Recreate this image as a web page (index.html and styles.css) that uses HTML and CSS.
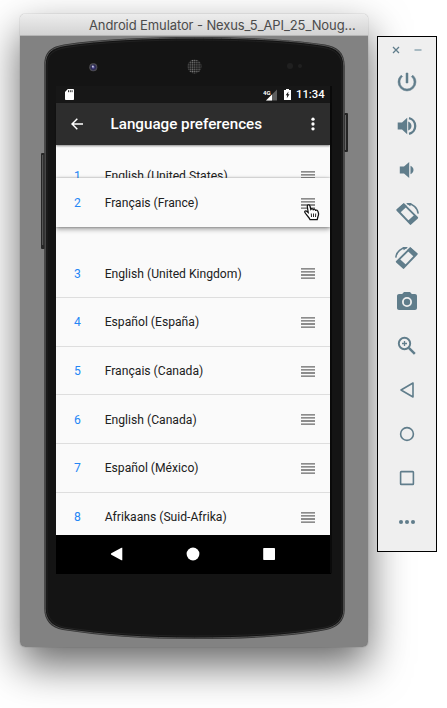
FILE: index.html
```html
<!DOCTYPE html>
<html lang="en">
<head>
<meta charset="utf-8">
<title>Android Emulator</title>
<link rel="stylesheet" href="styles.css">
</head>
<body>
<svg class="defs" width="0" height="0" aria-hidden="true">
  <symbol id="grip" viewBox="0 0 14 11"><path d="M0 .8h14M0 3.900h14M0 7h14M0 10.100h14" stroke="#686868" stroke-width="1.350"/></symbol>
  <symbol id="rotate" viewBox="0 0 24 24"><path d="M2.300 8 8.800 2.300 22.200 15.700 15.500 21.900Z" fill="none" stroke="currentColor" stroke-width="1.900" stroke-linejoin="round"/><path d="m1.500 7.800 7.300-6.500 3.300 3-7.200 6.700ZM12.400 19.300l7.100-6.500 3.200 3-7.200 6.800Z" fill="currentColor"/><path d="M12.300 2.100c5.300-.5 10.200 3.200 10.900 9.500" fill="none" stroke="currentColor" stroke-width="1.500"/><path d="M11 .9h5.500l-1.300 3.300Z" fill="currentColor"/></symbol>
</svg>
<main class="desktop">
  <section class="window">
    <header class="titlebar"><span>Android Emulator - Nexus_5_API_25_Noug…</span></header>
    <div class="stage">
      <svg class="device" viewBox="20 36 348 611" aria-hidden="true">
        <defs>
          <radialGradient id="lens"><stop offset="0" stop-color="#6b68b8"/><stop offset=".5" stop-color="#292653"/><stop offset="1" stop-color="#555"/></radialGradient>
          <pattern id="mesh" width="2.200" height="2.200" patternUnits="userSpaceOnUse"><rect width="2.200" height="2.200" fill="#171717"/><circle cx="1.100" cy="1.100" r=".75" fill="#777"/></pattern>
        </defs>
        <rect x="41" y="153" width="4" height="96" rx="1" fill="#262626"/><path d="M42.700 155v90" stroke="#606060"/>
        <rect x="344" y="113" width="4" height="39" rx="1" fill="#242424"/><path d="M345.500 115v35" stroke="#666"/>
        <path d="M44.300 65C44.300 51 52 46.500 64 44.500C100 39 146 37 194.500 37C244 37 291 39 325 44.500C337 46.500 344.700 52 344.700 66V610C344.700 621 337 628 326 630C289 637 244 639 194.500 639C144 639 101 636 63 630C51 628 44.300 620 44.300 609Z" fill="#303030"/>
        <path d="M45.300 65C45.300 52 53 47.500 65 45.500C101 40 147 38 194.500 38C243 38 290 40 324 45.500C336 47.500 343.700 53 343.700 66V610C343.700 620 336 627 325 629C288 636 243 638 194.500 638C145 638 102 635 64 629C52 627 45.300 619 45.300 609Z" fill="#141414" stroke="#5a5a5a" stroke-width=".9"/>
        <path d="M47 66C47 54 54 49.500 66 47.500C102 42 147 40 194.500 40C242 40 289 42 323 47.500C335 49.500 342 55 342 67V609C342 619 335 625.500 324 627.500C288 634 243 636 194.500 636C145 636 102 633 65 627.500C54 625.500 47 618 47 608Z" fill="#141414" stroke="#242424" stroke-width=".8"/>
        <circle cx="93.300" cy="67.300" r="4" fill="url(#lens)"/><circle cx="92.800" cy="66.500" r="1" fill="#c9c9df"/>
        <circle cx="194.500" cy="66.500" r="7" fill="url(#mesh)"/>
        <circle cx="290" cy="66" r="3" fill="#202020"/><circle cx="300" cy="66" r="2" fill="#202020"/>
        <path d="M56 573.500h275V86" fill="none" stroke="#000"/>
      </svg>
      <div class="screen">
        <div class="status">
          <svg class="sd" viewBox="0 0 9 11"><path d="M2.800 0H8.200Q9 0 9 .8v9.400q0 .8-.8.800H.8Q0 11 0 10.200V3Z" fill="#fff"/><path d="M3.500 1.200v2M5.300 1.200v2M7.100 1.200v2" stroke="#171717" stroke-width=".9"/></svg>
          <svg class="signal" viewBox="0 0 15 12"><path d="M14 .5v11H3Z" fill="#5e5e5e"/><path d="M9 5.500v6H3Z" fill="#fff"/><text x="0" y="5.500">4G</text></svg>
          <svg class="battery" viewBox="0 0 7 11"><path d="M2 0h3v1h2v10H0V1h2Z" fill="#fff"/><path d="M4.500 2.500 1.700 6.300h1.500L2.800 9.300 5.500 5.300H4Z" fill="#171717"/></svg>
          <span class="clock">11:34</span>
        </div>
        <div class="appbar">
          <svg class="arrow" viewBox="0 0 12 12"><path d="M6.300.8 1 6l5.300 5.200M1.200 6H12" fill="none" stroke="#fff" stroke-width="1.500"/></svg>
          <h1>Language preferences</h1>
          <svg class="more" viewBox="0 0 4 14"><g fill="#fff"><circle cx="2" cy="2.200" r="1.650"/><circle cx="2" cy="7" r="1.650"/><circle cx="2" cy="11.800" r="1.650"/></g></svg>
        </div>
        <div class="list">
          <div class="row first"><b>1</b><span>English (United States)</span><svg class="grip"><use href="#grip"/></svg></div>
          <div class="row dragged"><b>2</b><span>Français (France)</span><svg class="grip"><use href="#grip"/></svg></div>
          <div class="row"><b>3</b><span>English (United Kingdom)</span><svg class="grip"><use href="#grip"/></svg></div>
          <div class="row"><b>4</b><span>Español (España)</span><svg class="grip"><use href="#grip"/></svg></div>
          <div class="row"><b>5</b><span>Français (Canada)</span><svg class="grip"><use href="#grip"/></svg></div>
          <div class="row"><b>6</b><span>English (Canada)</span><svg class="grip"><use href="#grip"/></svg></div>
          <div class="row"><b>7</b><span>Español (México)</span><svg class="grip"><use href="#grip"/></svg></div>
          <div class="row"><b>8</b><span>Afrikaans (Suid-Afrika)</span><svg class="grip"><use href="#grip"/></svg></div>
          <svg class="pointer" viewBox="0 0 16 17"><path d="M5.500 14.500 2.300 10.500.8 8.300Q.5 6.700 2 6.800L4.200 8.500 3.300 2.500Q3.300.7 4.700.8 5.800.9 6.100 2.500L6.800 5.500Q8.300 3.900 9.200 5.700 10.700 4.500 11.500 6.300 13.500 5.500 13.900 7.500 15.200 10 14 12.500L13.200 15.700H6Z" fill="#fff" stroke="#111" stroke-width="1.250"/><path d="M7.300 9.500l.2 3.500M9.500 9.500v3.500M11.700 9.500l-.2 3.500" stroke="#111" stroke-width=".9"/></svg>
        </div>
        <div class="navbar">
          <svg viewBox="0 0 14 14"><path d="M12.300.8v12.400Q11.700 13.400 11 13L1.300 7.700Q.4 7 1.300 6.300L11 1Q11.700.6 12.300.8Z"/></svg>
          <svg viewBox="0 0 14 14"><circle cx="7" cy="7" r="6.400"/></svg>
          <svg viewBox="0 0 14 14"><rect x="1.200" y="1" width="11.800" height="12" rx=".7"/></svg>
        </div>
      </div>
    </div>
  </section>
  <aside class="tools">
    <div class="controls">
      <svg viewBox="0 0 8 8"><path d="m1 1 6 6M7 1 1 7" stroke="#607d8b" stroke-width="1.300"/></svg>
      <svg viewBox="0 0 8 8"><path d="M.5 4h7" stroke="#9bb0ba" stroke-width="1.700"/></svg>
    </div>
    <svg viewBox="0 0 24 24"><path d="M13 3h-2v10h2V3zm4.830 2.170-1.420 1.420A6.920 6.920 0 0 1 19 12a7 7 0 0 1-14 0c0-2.190 1.010-4.140 2.580-5.420L6.170 5.170A8.932 8.932 0 0 0 3 12a9 9 0 0 0 18 0c0-2.740-1.230-5.180-3.170-6.830z" fill="currentColor" stroke="currentColor" stroke-width=".5"/></svg>
    <svg viewBox="0 0 24 24"><path d="M2.700 8.500v7H7l5.200 4.700V3.800L7 8.500H2.700Zm10.500-1v9c2-.7 3.300-2.400 3.300-4.500s-1.300-3.800-3.300-4.500Z" fill="currentColor"/><path d="M14 4.200a8 8 0 0 1 0 15.600" fill="none" stroke="currentColor" stroke-width="2.300"/></svg>
    <svg viewBox="0 0 24 24"><path d="M4.800 8.600v6.800H9l5.200 4.700V3.900L9 8.600H4.800Zm10.700-.8v8.400c1.800-.7 3-2.300 3-4.200s-1.200-3.500-3-4.200Z" fill="currentColor"/></svg>
    <svg viewBox="0 0 24 24"><use href="#rotate"/></svg>
    <svg class="flip" viewBox="0 0 24 24"><use href="#rotate"/></svg>
    <svg viewBox="0 0 24 24"><path fill-rule="evenodd" d="M9 2 7.170 4H4c-1.100 0-2 .9-2 2v12c0 1.100.9 2 2 2h16c1.100 0 2-.9 2-2V6c0-1.100-.9-2-2-2h-3.170L15 2H9Zm3 5a5 5 0 1 1 0 10 5 5 0 0 1 0-10Z" fill="currentColor"/><circle cx="12" cy="12" r="3.200" fill="currentColor"/></svg>
    <svg viewBox="0 0 24 24"><g fill="none" stroke="currentColor"><circle cx="9.500" cy="9.500" r="5.700" stroke-width="1.900"/><path d="m13.800 13.800 6 6" stroke-width="2.500"/><path d="M9.500 7v5M7 9.500h5" stroke-width="1.300"/></g></svg>
    <svg viewBox="0 0 24 24"><path d="M18 5v14L6 12Z" fill="none" stroke="currentColor" stroke-width="1.600" stroke-linejoin="round"/></svg>
    <svg viewBox="0 0 24 24"><circle cx="12" cy="12" r="6.400" fill="none" stroke="currentColor" stroke-width="1.600"/></svg>
    <svg viewBox="0 0 24 24"><rect x="5.600" y="5.600" width="12.800" height="12.800" rx=".7" fill="none" stroke="currentColor" stroke-width="1.600"/></svg>
    <svg viewBox="0 0 24 24"><g fill="currentColor"><circle cx="6" cy="12" r="2.050"/><circle cx="12" cy="12" r="2.050"/><circle cx="18" cy="12" r="2.050"/></g></svg>
  </aside>
</main>
</body>
</html>
```

FILE: styles.css
```css
* { box-sizing: border-box; }
body { margin: 0; background: #fff; font-family: Roboto, sans-serif; }
svg { display: block; flex: none; }
.defs { position: absolute; }
.desktop { width: 447px; height: 708px; padding: 14px 0 0 20px; display: flex; align-items: flex-start; gap: 9px; overflow: hidden; }
.window { width: 348px; height: 633px; flex: none; border-radius: 5px; box-shadow: 0 0 1px rgba(0,0,0,.5), 0 18px 42px rgba(0,0,0,.6); }
.titlebar { height: 22px; border-radius: 5px 5px 0 0; border-bottom: 1px solid #b5b5b5; background: linear-gradient(#ededed, #d3d3d3); padding-left: 69px; font: 13px/23px Inter, sans-serif; color: #4b4b4b; white-space: nowrap; }
.titlebar span { display: inline-block; letter-spacing: -.1px; }
.stage { position: relative; height: 611px; padding: 50px 38px 0 36px; background: #828282; border-radius: 0 0 5px 5px; }
.device { position: absolute; inset: 0; width: 348px; height: 611px; }
.screen { position: relative; width: 274px; height: 487px; display: flex; flex-direction: column; background: #000; }
.status { height: 17px; flex: none; background: #171717; display: flex; align-items: center; padding: 0 6px 0 9px; color: #fff; }
.sd { width: 9px; height: 11px; margin-right: auto; }
.signal { width: 15px; height: 12px; margin-right: 6px; }
.signal text { font: bold 6px Roboto, sans-serif; fill: #fff; }
.battery { width: 7px; height: 11px; margin-right: 5px; }
.clock { width: 28px; font-size: 11.300px; font-weight: 500; line-height: 17px; white-space: nowrap; }
.appbar { position: relative; z-index: 3; height: 42px; flex: none; background: #2d2d2d; color: #fff; display: flex; align-items: center; padding: 0 15px; box-shadow: 0 1px 2px rgba(0,0,0,.45); }
.arrow { width: 12px; height: 12px; }
.appbar h1 { margin: 0 auto 0 27.500px; font-size: 15.200px; font-weight: 500; line-height: 43px; white-space: nowrap; }
.more { width: 4px; height: 14px; }
.list { position: relative; height: 390px; flex: none; padding-top: 7px; background: #fafafa; overflow: hidden; }
.row { height: 48.700px; display: flex; align-items: center; padding: 1px 15px 0 18px; border-bottom: 1px solid #dedede; font-size: 12.150px; color: #212121; background: #fafafa; }
.row b { width: 30.700px; font-weight: 400; color: #2486f5; }
.row span { margin-right: auto; white-space: nowrap; }
.row.first { border-color: transparent; }
.grip { width: 14px; height: 11px; }
.row.dragged { position: relative; z-index: 2; height: 49px; margin: -22.700px 0 22.400px; border: 0; box-shadow: 0 2px 5px rgba(0,0,0,.4), 0 0 2px rgba(0,0,0,.3); }
.pointer { position: absolute; z-index: 4; left: 248px; top: 59px; width: 16px; height: 17px; }
.navbar { height: 38px; flex: none; display: flex; justify-content: space-between; align-items: center; padding: 0 54px 1px 54px; }
.navbar svg { width: 14px; height: 14px; fill: #fff; }
.tools { position: relative; width: 60px; height: 516px; margin-top: 22px; flex: none; border: 1px solid #000; background: #efefef; display: grid; grid-template-rows: 23px repeat(11, 44px); justify-items: center; align-items: center; color: #607d8b; }
.tools > svg { width: 24px; height: 24px; }
.controls { display: flex; gap: 14px; align-self: end; padding-bottom: 6px; }
.controls svg { width: 8px; height: 8px; }
.tools .flip { transform: scaleX(-1); }
```
